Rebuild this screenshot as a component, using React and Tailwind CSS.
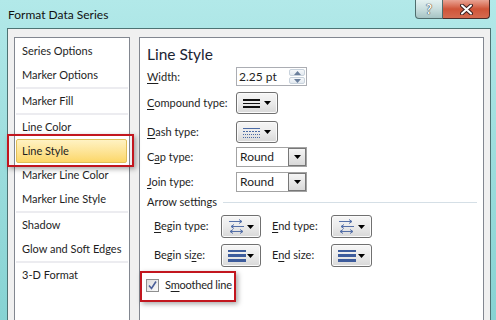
const items = [
  'Series Options',
  'Marker Options',
  '-',
  'Marker Fill',
  '-',
  'Line Color',
  '*Line Style',
  'Marker Line Color',
  'Marker Line Style',
  '-',
  'Shadow',
  'Glow and Soft Edges',
  '-',
  '3-D Format',
];

function Caret() {
  return (
    <svg width="7" height="4" viewBox="0 0 7 4">
      <path d="M0 0h7L3.5 4z" fill="#000" />
    </svg>
  );
}

function Key({ children }) {
  return <span className="underline underline-offset-2">{children}</span>;
}

function IconButton({ icon, w = 'w-[42px]', h = 'h-[22px]' }) {
  return (
    <div className={`flex ${w} ${h} items-center justify-between rounded-[3px] border border-[#707070] bg-linear-to-b from-[#f6f6f6] via-[#ebebeb] to-[#d8d8d8] px-[6px] shadow-[inset_0_0_0_1px_#fbfbfb]`}>
      {icon}
      <Caret />
    </div>
  );
}

function Select({ value }) {
  return (
    <div className="flex h-[20px] w-[71px] border border-[#a3a3a3] bg-white">
      <span className="flex-1 pl-[3px] text-[12px] leading-[18px]">{value}</span>
      <div className="flex w-[18px] items-center justify-center border border-[#777] bg-linear-to-b from-[#f5f5f5] to-[#d9d9d9]">
        <Caret />
      </div>
    </div>
  );
}

function CompoundIcon() {
  return (
    <svg width="17" height="11" viewBox="0 0 17 11">
      <rect x="0" y="1" width="17" height="2" fill="#111" />
      <rect x="0" y="5" width="17" height="1" fill="#111" />
      <rect x="0" y="8" width="17" height="2" fill="#111" />
    </svg>
  );
}

function DashIcon() {
  return (
    <svg width="17" height="11" viewBox="0 0 17 11">
      <path d="M0 1.5h17" stroke="#4b6aa5" strokeWidth="1" />
      <path d="M0 4.5h17" stroke="#4b6aa5" strokeWidth="1" strokeDasharray="2 1" />
      <path d="M0 7.5h17" stroke="#4b6aa5" strokeWidth="1" strokeDasharray="1 1" />
      <path d="M0 10.5h17" stroke="#4b6aa5" strokeWidth="1" strokeDasharray="1 1" />
    </svg>
  );
}

function ArrowIcon() {
  return (
    <svg width="17" height="15" viewBox="0 0 17 15" fill="none" stroke="#5570a8" strokeWidth="1">
      <path d="M1 2.5h13M11 0.5l3 2-3 2" />
      <path d="M3 7.5h13M6 5.5l-3 2 3 2" />
      <path d="M2 12.5h13M5 10.5l-3 2 3 2M12 10.5l3 2-3 2" />
    </svg>
  );
}

function SizeIcon() {
  return (
    <svg width="18" height="12" viewBox="0 0 18 12">
      <rect x="0" y="0" width="18" height="2" fill="#3d5c9c" />
      <rect x="0" y="4" width="18" height="3" fill="#3d5c9c" />
      <rect x="0" y="9" width="18" height="3" fill="#3d5c9c" />
    </svg>
  );
}

function Spinner() {
  return (
    <div className="flex h-[19px] w-[71px] border border-[#abadb3] bg-white">
      <span className="flex-1 pl-[2px] text-[12px] leading-[17px]">2.25 pt</span>
      <div className="my-px mr-px flex w-[16px] flex-col gap-px">
        <div className="flex flex-1 items-center justify-center rounded-[2px] border border-[#c8d2dc] bg-linear-to-b from-[#f5f8fb] to-[#e3e9ef]">
          <svg width="7" height="4" viewBox="0 0 7 4"><path d="M0 4h7L3.5 0z" fill="#6a7f9c" /></svg>
        </div>
        <div className="flex flex-1 items-center justify-center rounded-[2px] border border-[#c8d2dc] bg-linear-to-b from-[#f5f8fb] to-[#e3e9ef]">
          <svg width="7" height="4" viewBox="0 0 7 4"><path d="M0 0h7L3.5 4z" fill="#6a7f9c" /></svg>
        </div>
      </div>
    </div>
  );
}

export default function App() {
  return (
    <div className="relative h-[320px] w-[496px] overflow-hidden bg-linear-to-b from-[#b2e9e9] via-[#9cdddd] to-[#86d3d3] font-[Lato,sans-serif] text-[11px] text-[#1e1e1e]">
      {/* title bar */}
      <div className="flex h-[28px] items-start">
        <div className="pl-[8px] pt-[7px] text-[12px] leading-[16px] text-[#111]">Format Data Series</div>
        <div className="ml-auto mr-[6px] flex">
          <div className="flex h-[19px] w-[28px] items-center justify-center rounded-bl-[4px] border border-t-0 border-[#4f6d6d] bg-linear-to-b from-[#e4f1f1] via-[#c9dede] to-[#a6c4c4] text-[13px] font-bold leading-none text-white [text-shadow:0_0_1px_#222,0_0_1px_#222]">
            ?
          </div>
          <div className="flex h-[19px] w-[47px] items-center justify-center rounded-br-[4px] border border-l-0 border-t-0 border-[#4a2b28] bg-linear-to-b from-[#e9a393] via-[#cf5438] to-[#d46a4f]">
            <svg width="13" height="11" viewBox="0 0 13 11">
              <path d="M2 1.5l9 8M11 1.5l-9 8" stroke="#3a2020" strokeWidth="4" strokeLinecap="round" />
              <path d="M2 1.5l9 8M11 1.5l-9 8" stroke="#fff" strokeWidth="2" strokeLinecap="round" />
            </svg>
          </div>
        </div>
      </div>

      {/* dialog body */}
      <div className="ml-[7px] mr-[5px] flex h-[292px] gap-[9px] border-x border-t border-[#4d7373] bg-[#f0f0f0] pl-[6px] pt-[8px]">
        {/* category list */}
        <div className="h-[300px] w-[116px] shrink-0 border border-[#828790] bg-white pt-px">
          {items.map((it, i) =>
            it === '-' ? (
              <div key={i} className="mx-px h-[2px] bg-[#ececf0]" />
            ) : it.startsWith('*') ? (
              <div key={i} className="ml-px mr-[2px] h-[24px] whitespace-nowrap rounded-[2px] border border-[#e1bf5a] bg-linear-to-b from-[#fff2c2] to-[#fcd767] pl-[5px] leading-[22px]">
                {it.slice(1)}
              </div>
            ) : (
              <div key={i} className="h-[24px] whitespace-nowrap pl-[7px] leading-[24px]">
                {it}
              </div>
            )
          )}
        </div>

        {/* settings panel */}
        <div className="h-[300px] w-[345px] shrink-0 whitespace-nowrap border border-[#828790] bg-white pl-[7px] pt-[4px]">
          <div className="h-[25px] text-[15.5px] leading-[25px] text-[#1b2433]">Line Style</div>

          <div className="flex h-[19px] items-center">
            <span className="w-[89px] pt-[2px]"><Key>W</Key>idth:</span>
            <Spinner />
          </div>

          <div className="mt-[6px] flex h-[22px] items-center">
            <span className="w-[89px]"><Key>C</Key>ompound type:</span>
            <IconButton icon={<CompoundIcon />} />
          </div>

          <div className="mt-[7px] flex h-[22px] items-center">
            <span className="w-[89px]"><Key>D</Key>ash type:</span>
            <IconButton icon={<DashIcon />} />
          </div>

          <div className="mt-[4px] flex h-[20px] items-center">
            <span className="w-[89px]">C<Key>a</Key>p type:</span>
            <Select value="Round" />
          </div>

          <div className="mt-[5px] flex h-[20px] items-center">
            <span className="w-[89px]"><Key>J</Key>oin type:</span>
            <Select value="Round" />
          </div>

          <div className="mt-[2px] flex h-[16px] items-center pr-[6px]">
            <span>Arrow settings</span>
            <div className="ml-[6px] h-px flex-1 bg-[#d5dfe6]" />
          </div>

          <div className="mt-[5px] flex h-[23px] items-center pl-[7px]">
            <span className="w-[67px]"><Key>B</Key>egin type:</span>
            <IconButton w="w-[40px]" h="h-[23px]" icon={<ArrowIcon />} />
            <span className="ml-[11px] w-[59px]"><Key>E</Key>nd type:</span>
            <IconButton w="w-[41px]" h="h-[23px]" icon={<ArrowIcon />} />
          </div>

          <div className="mt-[6px] flex h-[23px] items-center pl-[7px]">
            <span className="w-[67px]">Begin si<Key>z</Key>e:</span>
            <IconButton w="w-[40px]" h="h-[23px]" icon={<SizeIcon />} />
            <span className="ml-[11px] w-[59px]">E<Key>n</Key>d size:</span>
            <IconButton w="w-[41px]" h="h-[23px]" icon={<SizeIcon />} />
          </div>

          <div className="mt-[9px] flex h-[18px] items-center">
            <div className="ml-[-1px] flex h-[13px] w-[13px] items-center justify-center border border-[#8f8f8f] bg-linear-to-br from-[#dcdcdc] to-[#fbfbfb]">
              <svg width="9" height="9" viewBox="0 0 9 9">
                <path d="M1 4.5l2.5 3L8 0.5" fill="none" stroke="#4b5f99" strokeWidth="1.6" />
              </svg>
            </div>
            <span className="ml-[6px] tracking-[-0.2px]">S<Key>m</Key>oothed line</span>
          </div>
        </div>
      </div>

      {/* annotation boxes */}
      <div className="absolute left-[7px] top-[134px] h-[33px] w-[127px] border-2 border-[#c2161e] shadow-[2px_2px_5px_rgba(0,0,0,0.35)]" />
      <div className="absolute left-[140px] top-[271px] h-[31px] w-[96px] border-2 border-[#c2161e] shadow-[2px_2px_5px_rgba(0,0,0,0.35)]" />
    </div>
  );
}
